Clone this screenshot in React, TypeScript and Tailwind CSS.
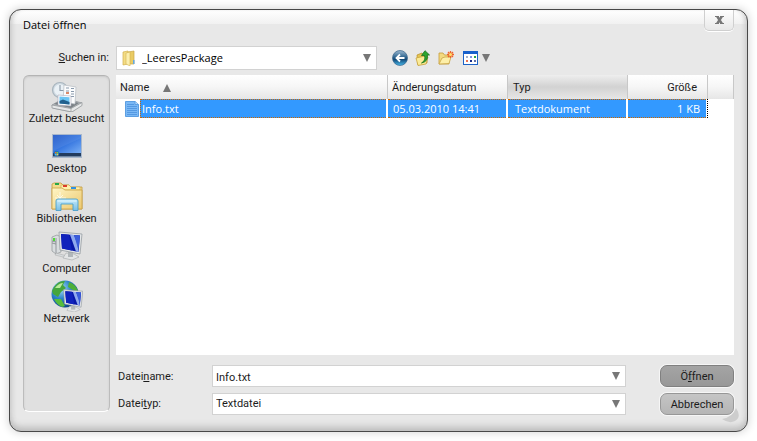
import type { ReactNode } from "react";

const label = "font-['Roboto','Liberation_Sans',sans-serif] text-[#1c1c1c]";

function Arrow({ up = false }: { up?: boolean }) {
  return (
    <svg width="8" height="8" viewBox="0 0 8 8" className="shrink-0" aria-hidden="true">
      <path d={up ? "M0 8 4 0 8 8Z" : "M0 0H8L4 8Z"} fill="#777" />
    </svg>
  );
}

function RecentIcon() {
  return (
    <svg width="32" height="32" viewBox="0 0 32 32" aria-hidden="true">
      <path d="M1 25 13 18 31 23 21 32 2 28Z" fill="#b4b8bb" stroke="#858a8e" strokeWidth=".6" />
      <path d="M3 24 13 19 28 23 20 28Z" fill="#7b8287" />
      <circle cx="9" cy="10" r="7.500" fill="#cfdae2" stroke="#a9b5be" strokeWidth="1.200" />
      <circle cx="9" cy="10" r="5.800" fill="#eaf1f6" />
      <path d="M9 5V10.500H13" stroke="#8b9aa8" strokeWidth="1.100" fill="none" />
      <path d="M13 5 25 7 24 24 12 22Z" fill="#fbfcfd" stroke="#b6bcc2" strokeWidth=".7" />
      <path d="M15 8H18M20 8.500H23M15 11H18M20 11.500H23M20 14H23M20 16.500H23" stroke="#8a9aac" strokeWidth="1" />
      <path d="M15 12H18V14H15Z" fill="#d9896a" />
      <path d="M7 15 20 16 20 26 7 25Z" fill="#fff" stroke="#aab" strokeWidth=".6" />
      <path d="M8.500 16.500 18.500 17.300V24.500L8.500 23.500Z" fill="#6cc4f3" />
      <path d="M8.500 21 12 19.500 18.500 22V24.500L8.500 23.500Z" fill="#21618e" />
      <path d="M1 25 20 28.500 31 22.500V25.500L21 32 1 28Z" fill="#e6e8e9" stroke="#8c9194" strokeWidth=".7" />
      <path d="M20 28.500V32" stroke="#999" strokeWidth=".7" />
    </svg>
  );
}

function DesktopIcon() {
  return (
    <svg width="32" height="32" viewBox="0 0 32 32" aria-hidden="true">
      <defs>
        <linearGradient id="desk" x1="0" y1="0" x2="1" y2="1">
          <stop offset="0" stopColor="#2258c8" />
          <stop offset=".5" stopColor="#3777e0" />
          <stop offset="1" stopColor="#78aef5" />
        </linearGradient>
      </defs>
      <rect x="1" y="4" width="30" height="24" fill="#a9b8cc" />
      <rect x="2" y="5" width="28" height="18" fill="url(#desk)" />
      <path d="M2 21 30 8V5H2Z" fill="#fff" opacity=".07" />
      <rect x="2" y="23" width="28" height="3" fill="#223c5e" />
      <rect x="2" y="26" width="28" height="1" fill="#7188a3" />
      <circle cx="5.500" cy="23.500" r="2.800" fill="#2372b5" />
      <rect x="4" y="22" width="1.500" height="1.500" fill="#f36b2c" />
      <rect x="5.700" y="22" width="1.500" height="1.500" fill="#7fce3c" />
      <rect x="4" y="23.800" width="1.500" height="1.500" fill="#4bc0f5" />
      <rect x="5.700" y="23.800" width="1.500" height="1.500" fill="#fbd043" />
    </svg>
  );
}

function LibraryIcon() {
  return (
    <svg width="32" height="32" viewBox="0 0 32 32" aria-hidden="true">
      <defs>
        <linearGradient id="lib" x1="0" y1="0" x2="1" y2="1">
          <stop offset="0" stopColor="#fff6c6" />
          <stop offset="1" stopColor="#ecc870" />
        </linearGradient>
        <linearGradient id="stand" x1="0" y1="0" x2="0" y2="1">
          <stop offset="0" stopColor="#c4eafa" />
          <stop offset="1" stopColor="#79bfe5" />
        </linearGradient>
      </defs>
      <path d="M1 29V4L3 3H10L12 5H18L20 7H31V29Z" fill="#f3dc8c" stroke="#c39a3d" strokeWidth=".8" />
      <path d="M10 5H18L20 7H29V10H10Z" fill="#fff0ab" stroke="#c7a24a" strokeWidth=".5" />
      <rect x="4" y="3" width="4" height="2" fill="#28a848" />
      <rect x="12" y="5" width="4" height="2" fill="#db3c2b" />
      <rect x="20" y="7" width="5" height="2" fill="#2e91e4" />
      <path d="M1 8H11L14 10H31V29H1Z" fill="url(#lib)" stroke="#c9a144" strokeWidth=".8" />
      <path d="M9 12V23M4 18H15M6 15 12 21M12 15 6 21" stroke="#fffef0" strokeWidth=".8" />
      <path d="M5 21Q5 19 7 19H25Q27 19 27 21V30.500H22V24H10V30.500H5Z" fill="url(#stand)" stroke="#4b9fcb" strokeWidth=".9" />
      <path d="M6.500 21H25.500" stroke="#e2f7ff" />
    </svg>
  );
}

function Monitor() {
  return (
    <g>
      <path d="M15 23 23 24 28 27 21 30 12 28Z" fill="#e3e5e6" stroke="#a4a8aa" strokeWidth=".6" />
      <path d="M17 22H22V27H17Z" fill="#b2b7ba" />
      <path d="M8 2 31 4 29 24 9 20Z" fill="#e3e6e8" stroke="#8c9399" strokeWidth=".7" />
      <path d="M10 4 29 5.500 27.500 22 11 18.500Z" fill="#0818a8" />
      <path d="M10 4 18 4.700 21 20.500 11 18.500Z" fill="#1022bc" />
      <path d="M19 4.700 23 5 26.500 14 27.500 22 25 21.500Z" fill="#8fa9ee" />
      <path d="M23 5 29 5.500 27.500 20Z" fill="#3a5ddc" />
    </g>
  );
}

function ComputerIcon() {
  return (
    <svg width="32" height="32" viewBox="0 0 32 32" aria-hidden="true">
      <path d="M1 7 6 5 10 7V22L5 24 1 21Z" fill="#d9dddf" stroke="#8e9396" strokeWidth=".7" />
      <path d="M5 8V24M1 11 5 12M1 13 5 14" stroke="#81878b" strokeWidth=".8" />
      <rect x="2" y="8" width="2" height="3" fill="#4fdb35" />
      <path d="M5 23 16 26V28L4 25Z" fill="#d8dcde" stroke="#999" strokeWidth=".4" />
      <Monitor />
    </svg>
  );
}

function NetworkIcon() {
  return (
    <svg width="32" height="32" viewBox="0 0 32 32" aria-hidden="true">
      <defs>
        <radialGradient id="globe" cx=".35" cy=".3" r=".75">
          <stop offset="0" stopColor="#a8e0fb" />
          <stop offset=".5" stopColor="#2b83c8" />
          <stop offset="1" stopColor="#0b3f83" />
        </radialGradient>
      </defs>
      <circle cx="14" cy="14" r="13.500" fill="url(#globe)" />
      <path d="M3 7Q8 0 14 1L12 5 15 8 10 12 7 17 2 14 1 11Z" fill="#45a63c" />
      <path d="M18 2Q26 5 27 12L22 10 17 7Z" fill="#4caf38" />
      <path d="M3 19 10 19 14 26 11 27Q6 25 3 19Z" fill="#57bd3b" />
      <path d="M4 8Q8 3 12 3L9 8Z" fill="#b9ea9a" />
      <g transform="translate(6 8) scale(.83 .8)">
        <Monitor />
      </g>
    </svg>
  );
}

function FolderIcon() {
  return (
    <svg width="16" height="16" viewBox="0 0 16 16" className="shrink-0" aria-hidden="true">
      <path d="M2 2 7 1V14L2 15Z" fill="#f3dc84" stroke="#d3b04c" strokeWidth=".7" />
      <path d="M7 2 13 1V14H7Z" fill="#eacb63" stroke="#c9a647" strokeWidth=".7" />
      <path d="M5 3 9 2V16L5 14Z" fill="#fcefae" stroke="#d4b351" strokeWidth=".6" />
      <path d="M12 10H13.500V14H12Z" fill="#63a8e4" />
    </svg>
  );
}

function DocumentIcon() {
  return (
    <svg width="14" height="17" viewBox="0 0 14 17" className="shrink-0" aria-hidden="true">
      <path d="M.5 1.500H10L13.500 4.500V16.500H.5Z" fill="#7ab8f5" stroke="#5c9fe2" />
      <path d="M2 4.500H9M2 6.500H12M2 8.500H12M2 10.500H12M2 12.500H12M2 14.500H12" stroke="#5499e2" />
      <path d="M10 1.500V4.500H13.500" fill="#b4d9fb" stroke="#5c9fe2" />
    </svg>
  );
}

function BackIcon() {
  return (
    <svg width="16" height="16" viewBox="0 0 16 16" aria-hidden="true">
      <defs>
        <linearGradient id="back" x1="0" y1="0" x2="0" y2="1">
          <stop offset="0" stopColor="#9db9d0" />
          <stop offset=".45" stopColor="#2f6590" />
          <stop offset=".6" stopColor="#144a78" />
          <stop offset="1" stopColor="#48bbed" />
        </linearGradient>
      </defs>
      <circle cx="8" cy="8" r="7.500" fill="url(#back)" stroke="#39648b" strokeWidth=".7" />
      <path d="M12.500 8H4.500M8 4.500 4.500 8 8 11.500" stroke="#fff" strokeWidth="1.800" fill="none" />
    </svg>
  );
}

function UpIcon() {
  return (
    <svg width="16" height="16" viewBox="0 0 16 16" aria-hidden="true">
      <path d="M2 5 7 3 8 5 12 4V13L3 15Z" fill="#e6c552" stroke="#bd942f" strokeWidth=".8" />
      <path d="M1 8 10 6 13 7 11 14 3 15.500Z" fill="#fbeb97" stroke="#c6a23c" strokeWidth=".8" />
      <path d="M6.500 13Q11 10.500 9.500 5.500H6.500L10 .7 14.500 5H12.300Q13.500 11.500 6.500 13Z" fill="#2ba52e" stroke="#16711c" strokeWidth=".8" />
    </svg>
  );
}

function NewFolderIcon() {
  return (
    <svg width="16" height="16" viewBox="0 0 16 16" aria-hidden="true">
      <path d="M1 3H5L6.500 5H11V14H1Z" fill="#f3da80" stroke="#c59d3b" strokeWidth=".8" />
      <path d="M1 14 4 8 7 7H13L11 13.500Z" fill="#fdefa8" stroke="#c9a647" strokeWidth=".8" />
      <path d="M12.500 1V8M9 4.500H16M10 2 15 7M15 2 10 7" stroke="#ee652c" strokeWidth="1.300" />
      <circle cx="12.500" cy="4.500" r="1.500" fill="#ffe26f" />
    </svg>
  );
}

function ViewsIcon() {
  return (
    <svg width="16" height="16" viewBox="0 0 16 16" aria-hidden="true">
      <rect x=".5" y="1.500" width="14" height="13" fill="#fff" stroke="#1d63c7" />
      <rect x="0" y="1" width="15" height="3" fill="#1760cb" />
      <path d="M3 6h2v2h-2z" fill="#a3b0c8" />
      <path d="M7 6h2v2h-2z" fill="#7d92e4" />
      <path d="M11 6h2v2h-2z" fill="#25a244" />
      <path d="M3 10h2v2h-2z" fill="#e87252" />
      <path d="M7 10h2v2h-2z" fill="#172d8c" />
      <path d="M11 10h2v2h-2z" fill="#6170a6" />
    </svg>
  );
}

const places: { name: string; icon: ReactNode }[] = [
  { name: "Zuletzt besucht", icon: <RecentIcon /> },
  { name: "Desktop", icon: <DesktopIcon /> },
  { name: "Bibliotheken", icon: <LibraryIcon /> },
  { name: "Computer", icon: <ComputerIcon /> },
  { name: "Netzwerk", icon: <NetworkIcon /> },
];

const th = "h-6 border-r border-[#c8c8c8] bg-linear-to-b from-white via-[#f6f6f6] to-[#e6e6e6] p-0 pt-0.5 text-left font-normal";
const cell = "flex h-[19px] items-center border-y border-dotted border-[#cc6600] bg-[#3399ff] text-white";
const field = "h-full w-full appearance-none border border-[#d2d2d2] bg-white outline-none";
const action = "h-[22px] rounded-[7px] border pt-0.5 shadow-[0_0_0_1px_#f6f6f6]";

export default function App() {
  return (
    <div className="bg-white p-[9px] font-['Open_Sans','Noto_Sans',sans-serif] text-[11px] leading-[14px] text-black">
      <main
        aria-label="Datei öffnen"
        className="relative rounded-[12px] border border-[#484848] bg-[#e8e8e8] bg-[linear-gradient(#fff,#f1f1f1_14px,transparent_14px)] px-[13px] pb-4 shadow-[inset_0_-7px_7px_-3px_#bcbcbc,inset_5px_0_5px_-3px_#cfcfcf,inset_-5px_0_5px_-3px_#cfcfcf,0_0_9px_1px_#d8d8d8]"
      >
        <header className="flex h-9 items-start justify-between">
          <h1 className="pt-2">Datei öffnen</h1>
          <button
            aria-label="Schließen"
            className="flex h-[21px] w-[30px] items-center justify-center rounded-b-[5px] border border-t-0 border-[#cfcfcf] bg-[#ececec] bg-linear-to-b from-white to-[#e8e8e8] shadow-[0_1px_0_#fff]"
          >
            <svg width="9" height="8" viewBox="0 0 9 8" aria-hidden="true">
              <path d="M2 0 7 8M7 0 2 8" stroke="#777" strokeWidth="2.400" />
              <path d="M0 .5H4M5 .5H9M0 7.500H4M5 7.500H9" stroke="#777" />
            </svg>
          </button>
        </header>

        <div className="flex h-6 items-center gap-[7px]">
          <label htmlFor="folder" className={`${label} w-[86px] shrink-0 text-right`}>
            <u>S</u>uchen in:
          </label>
          <div className="relative h-6 w-[261px]">
            <select id="folder" className={`${field} pr-5 pl-[25px]`}>
              <option>_LeeresPackage</option>
            </select>
            <span className="pointer-events-none absolute inset-0 flex items-center justify-between pr-1.5 pl-[5px]">
              <FolderIcon />
              <Arrow />
            </span>
          </div>
          <div className="flex items-center gap-[7px] pl-2">
            <button aria-label="Zurück"><BackIcon /></button>
            <button aria-label="Übergeordneter Ordner"><UpIcon /></button>
            <button aria-label="Neuer Ordner"><NewFolderIcon /></button>
            <button aria-label="Ansicht" className="flex items-center gap-[3px] pl-0.5"><ViewsIcon /><Arrow /></button>
          </div>
        </div>

        <div className="flex gap-1.5 pt-[5px]">
          <nav
            aria-label="Orte"
            className="mb-[3px] w-[87px] shrink-0 rounded-[6px] border border-t-[#b4b4b4] border-r-[#bcbcbc] border-b-white border-l-[#bcbcbc] bg-[#e0e0e0] pt-1 shadow-[inset_0_1px_2px_#c8c8c8]"
          >
            {places.map((p) => (
              <button key={p.name} className={`${label} flex h-[50px] w-full flex-col items-center whitespace-nowrap`}>
                {p.icon}
                <span>{p.name}</span>
              </button>
            ))}
          </nav>

          <div className="flex min-w-0 flex-1 flex-col gap-2.5">
            <div className="h-[280px] bg-white">
              <table className="w-full table-fixed border-separate border-spacing-0">
                <colgroup>
                  <col />
                  <col className="w-[120px]" />
                  <col className="w-[120px]" />
                  <col className="w-[80px]" />
                  <col className="w-[26px]" />
                </colgroup>
                <thead className={label}>
                  <tr>
                    <th className={`${th} pl-1`}>
                      <span className="flex items-center gap-[14px]">Name <Arrow up /></span>
                    </th>
                    <th className={`${th} pl-1`}>Änderungsdatum</th>
                    <th className="h-6 border-r border-[#c8c8c8] bg-linear-to-b from-[#eee] via-[#d2d2d2] to-[#e6e6e6] p-0 pt-0.5 pl-[5px] text-left font-normal">Typ</th>
                    <th className={`${th} pr-2.5`}><span className="block text-right">Größe</span></th>
                    <th className={th} aria-label="Leer" />
                  </tr>
                </thead>
                <tbody>
                  <tr aria-selected="true">
                    <td className="p-0 pr-0.5 pl-[9px]">
                      <div className="flex items-center gap-px">
                        <DocumentIcon />
                        <div className={`${cell} flex-1 border-l pl-px`}>Info.txt</div>
                      </div>
                    </td>
                    <td className="p-0 pr-0.5"><div className={`${cell} pl-[5px]`}>05.03.2010 14:41</div></td>
                    <td className="p-0 pr-0.5"><div className={`${cell} pl-[7px]`}>Textdokument</div></td>
                    <td className="border-r border-dotted border-black p-0 pr-px">
                      <div className={`${cell} justify-end pr-[6px]`}>1 KB</div>
                    </td>
                    <td className="p-0" />
                  </tr>
                </tbody>
              </table>
            </div>

            <form className="grid grid-cols-[96px_minmax(0,1fr)_74px] items-center gap-y-1.5" onSubmit={(e) => e.preventDefault()}>
              <label htmlFor="filename" className={`${label} pt-0.5 pl-0.5`}>Datei<u>n</u>ame:</label>
              <div className="relative mr-[34px] h-[22px]">
                <input id="filename" defaultValue="Info.txt" className={`${field} ${label} pt-0.5 pr-5 pl-[3px]`} />
                <button type="button" aria-label="Dateinamen anzeigen" className="absolute inset-y-0 right-1.5"><Arrow /></button>
              </div>
              <button type="submit" className={`${action} ${label} border-[#808080] bg-linear-to-b from-[#a4a4a4] to-[#989898]`}>
                Ö<u>f</u>fnen
              </button>
              <label htmlFor="filetype" className={`${label} pl-0.5`}>Datei<u>t</u>yp:</label>
              <div className="relative mr-[34px] h-[22px]">
                <select id="filetype" className={`${field} ${label} pr-5 pl-[3px]`}>
                  <option>Textdatei</option>
                </select>
                <span className="pointer-events-none absolute inset-y-0 right-1.5 flex items-center"><Arrow /></span>
              </div>
              <button type="button" className={`${action} ${label} border-[#979797] bg-linear-to-b from-[#c5c5c5] to-[#b5b5b5]`}>
                Abbrechen
              </button>
            </form>
          </div>
        </div>
        <svg width="17" height="15" viewBox="0 0 17 15" className="absolute right-2 bottom-2" aria-hidden="true">
          <path d="M0 11Q11 9 14 0 20 9 13 13 7 16 0 11Z" fill="#cdcdcd" />
        </svg>
      </main>
    </div>
  );
}
